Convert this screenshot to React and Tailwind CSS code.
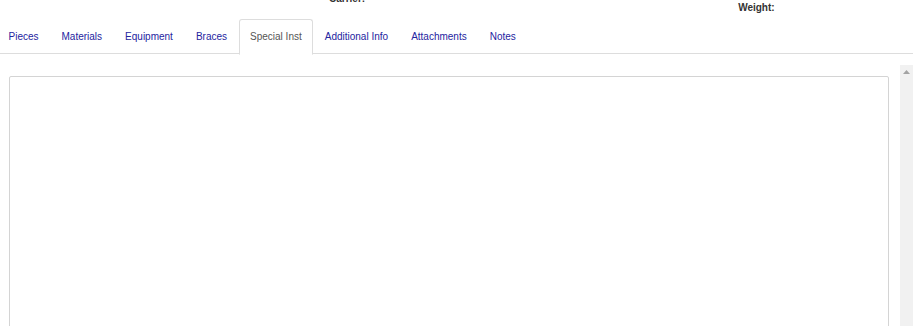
import React from "react";

const tabs = [
  "Pieces",
  "Materials",
  "Equipment",
  "Braces",
  "Special Inst",
  "Additional Info",
  "Attachments",
  "Notes",
];

export default function App() {
  const active = "Special Inst";

  return (
    <div className="w-[920px] h-[326px] overflow-hidden bg-white font-['Liberation_Sans',Arial,sans-serif]">
      {/* Header labels */}
      <div className="flex h-[19px] text-[10px] font-bold text-[#333] leading-[14px]">
        <span className="ml-[329px] -mt-[8px]">Carrier:</span>
        <span className="ml-[373px] mt-[1px]">Weight:</span>
      </div>

      {/* Tabs */}
      <div className="w-[913px] border-b border-[#ddd] h-[35px]">
        <div className="flex -ml-[3px] text-[10px] leading-[14px]">
          {tabs.map((t) =>
            t === active ? (
              <div
                key={t}
                className="px-[10.5px] pt-[10px] pb-[11px] border border-[#ddd] border-b-white rounded-t-[3px] bg-white text-[#555] h-[36px]"
              >
                {t}
              </div>
            ) : (
              <div
                key={t}
                className="px-[10.5px] pt-[10px] pb-[11px] border border-transparent text-[#2424a0]"
              >
                {t}
              </div>
            )
          )}
        </div>
      </div>

      {/* Tab content */}
      <div className="flex w-[913px] mt-[11px]">
        <div className="flex-1 pl-[9px] pr-[11px] pt-[11px]">
          <div className="h-[300px] border border-[#d4d4d4] rounded-[2px] bg-white"></div>
        </div>
        <div className="w-[13px] h-[300px] bg-[#f1f1f1] flex justify-center pt-[5px]">
          <svg width="7" height="4" viewBox="0 0 7 4">
            <path d="M3.5 0 L7 4 L0 4 Z" fill="#a3a3a3" />
          </svg>
        </div>
      </div>
    </div>
  );
}
